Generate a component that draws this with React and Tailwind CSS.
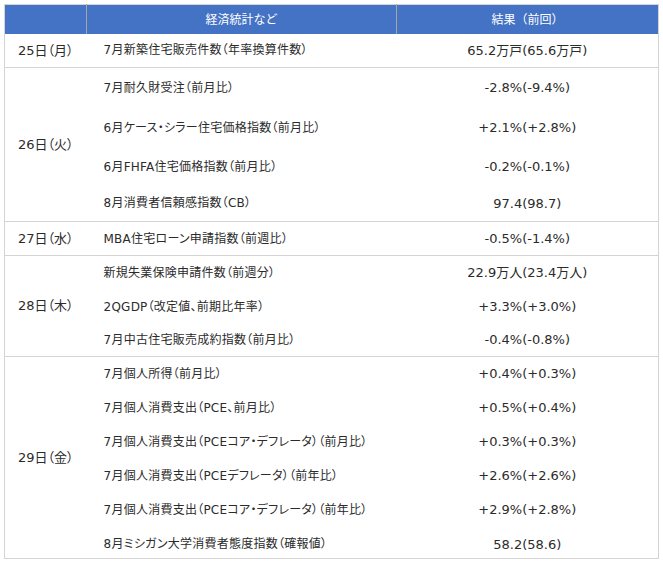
import React from "react";

const groups = [
  { date: "25日（月）", rows: [["7月新築住宅販売件数（年率換算件数）", "65.2万戸(65.6万戸)"]], h: [34] },
  {
    date: "26日（火）",
    rows: [
      ["7月耐久財受注（前月比）", "-2.8%(-9.4%)"],
      ["6月ケース・シラー住宅価格指数（前月比）", "+2.1%(+2.8%)"],
      ["6月FHFA住宅価格指数（前月比）", "-0.2%(-0.1%)"],
      ["8月消費者信頼感指数（CB）", "97.4(98.7)"],
    ],
    h: [40, 40, 38, 36],
  },
  { date: "27日（水）", rows: [["MBA住宅ローン申請指数（前週比）", "-0.5%(-1.4%)"]], h: [34] },
  {
    date: "28日（木）",
    rows: [
      ["新規失業保険申請件数（前週分）", "22.9万人(23.4万人)"],
      ["2QGDP（改定値、前期比年率）", "+3.3%(+3.0%)"],
      ["7月中古住宅販売成約指数（前月比）", "-0.4%(-0.8%)"],
    ],
    h: [34, 34, 33],
  },
  {
    date: "29日（金）",
    rows: [
      ["7月個人所得（前月比）", "+0.4%(+0.3%)"],
      ["7月個人消費支出（PCE、前月比）", "+0.5%(+0.4%)"],
      ["7月個人消費支出（PCEコア・デフレータ）（前月比）", "+0.3%(+0.3%)"],
      ["7月個人消費支出（PCEデフレータ）（前年比）", "+2.6%(+2.6%)"],
      ["7月個人消費支出（PCEコア・デフレータ）（前年比）", "+2.9%(+2.8%)"],
      ["8月ミシガン大学消費者態度指数（確報値）", "58.2(58.6)"],
    ],
    h: [34, 34, 34, 34, 34, 32],
  },
];

export default function App() {
  return (
    <div className="bg-white p-1 font-['DejaVu_Sans','Noto_Sans_CJK_JP',sans-serif] text-[#2b2b2b]">
      <table className="w-[655px] border-collapse border border-[#d4d4d4]">
        <thead>
          <tr className="h-[29px] bg-[#4472c4] text-white font-['Noto_Sans_CJK_JP',sans-serif] text-[12px]">
            <th className="w-[82px] border-r border-[#a6a6a6] font-normal"></th>
            <th className="w-[310px] border-r border-[#a6a6a6] font-normal">経済統計など</th>
            <th className="font-normal">結果（前回）</th>
          </tr>
        </thead>
        <tbody>
          {groups.map((g) =>
            g.rows.map((r, i) => {
              const lastOfAll = g.date === "29日（金）" && i === g.rows.length - 1;
              return (
                <tr
                  key={g.date + i}
                  style={{ height: g.h[i] }}
                  className={i === g.rows.length - 1 ? "border-b border-[#d4d4d4]" : ""}
                >
                  {i === 0 && (
                    <td
                      rowSpan={g.rows.length}
                      className="text-center align-middle text-[13px] [font-feature-settings:'palt']"
                    >
                      {g.date}
                    </td>
                  )}
                  <td
                    className={
                      lastOfAll
                        ? "pl-[17px] pt-[4px] align-middle text-[12px] tracking-[0.25px] [font-feature-settings:'palt']"
                        : "pl-[17px] align-middle text-[12px] tracking-[0.25px] [font-feature-settings:'palt']"
                    }
                  >
                    {r[0]}
                  </td>
                  <td
                    className={
                      lastOfAll
                        ? "pt-[4px] text-center align-middle text-[13px]"
                        : "text-center align-middle text-[13px]"
                    }
                  >
                    {r[1]}
                  </td>
                </tr>
              );
            })
          )}
        </tbody>
      </table>
    </div>
  );
}
